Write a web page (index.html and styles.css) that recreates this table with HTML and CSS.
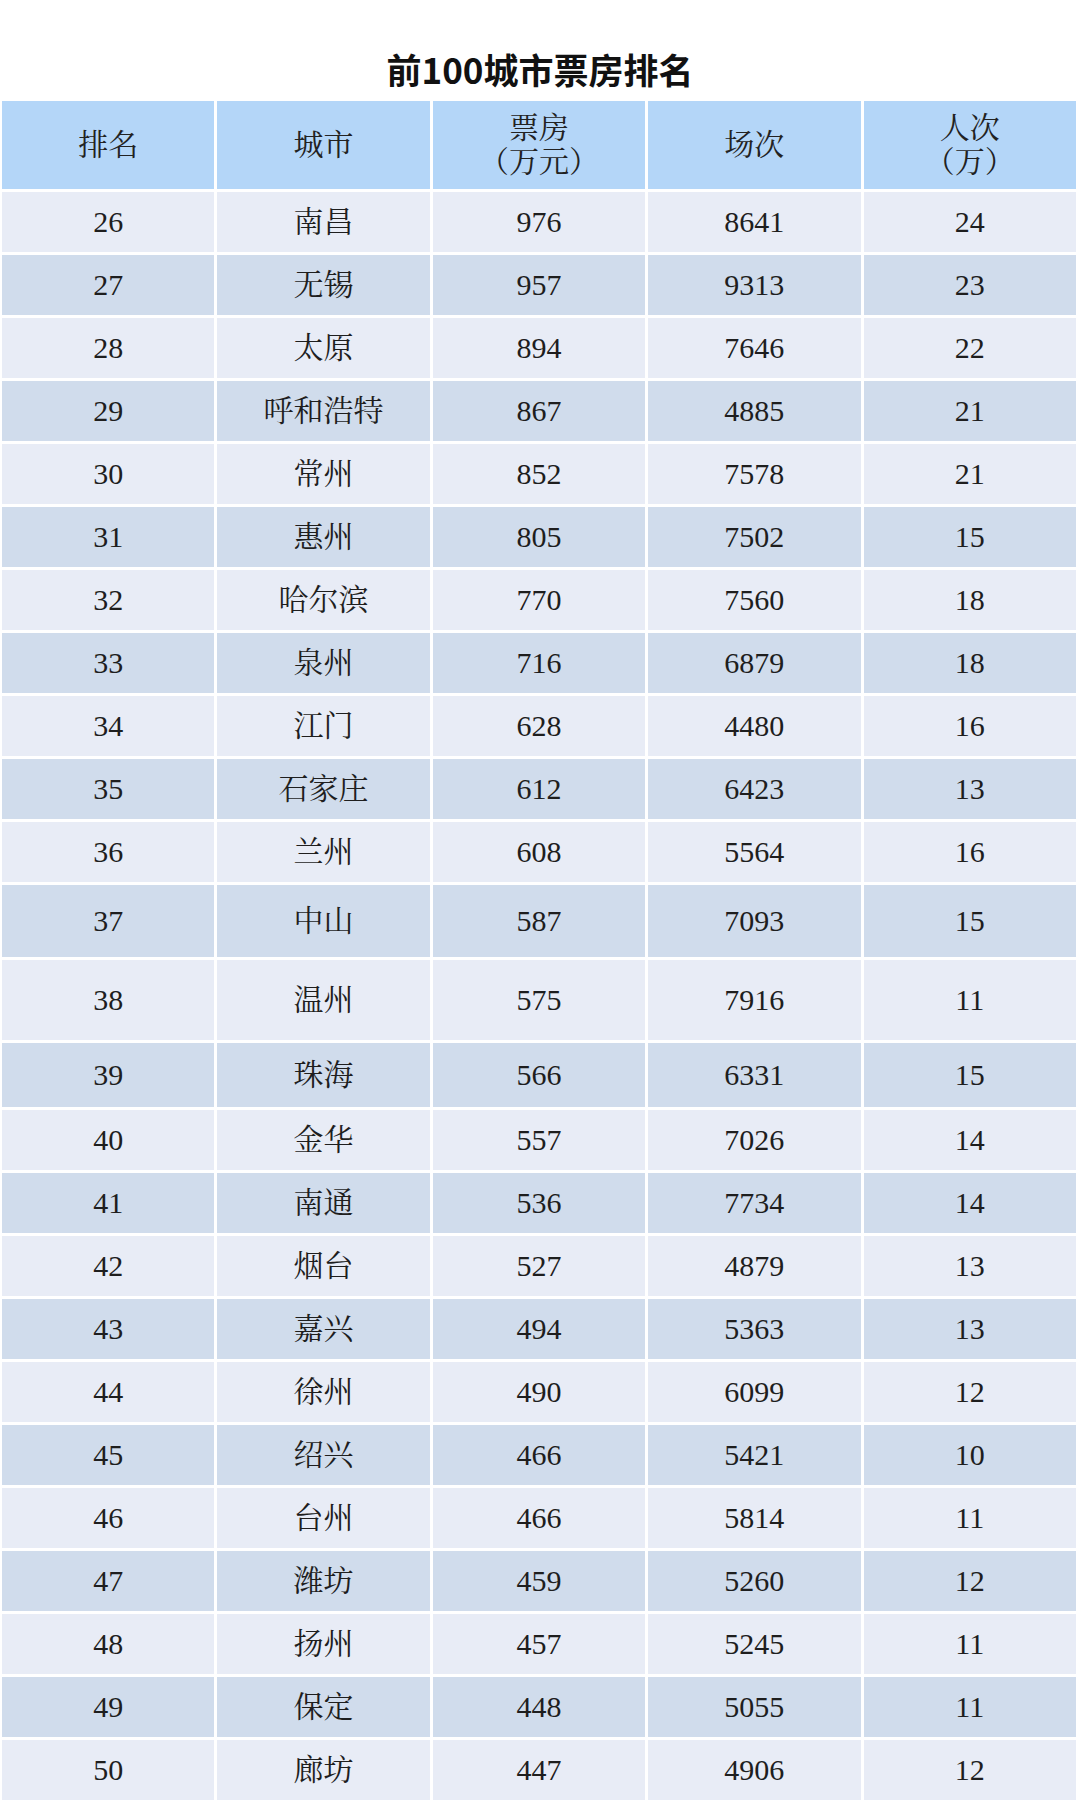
FILE: index.html
```html
<!DOCTYPE html>
<html lang="zh-CN">
<head>
<meta charset="utf-8">
<title>前100城市票房排名</title>
<link rel="stylesheet" href="styles.css">
</head>
<body>
<h1 class="title">前100城市票房排名</h1>
<table class="rank">
  <thead>
    <tr>
      <th>排名</th>
      <th>城市</th>
      <th>票房<br>（万元）</th>
      <th>场次</th>
      <th>人次<br>（万）</th>
    </tr>
  </thead>
  <tbody>
    <tr><td>26</td><td>南昌</td><td>976</td><td>8641</td><td>24</td></tr>
    <tr><td>27</td><td>无锡</td><td>957</td><td>9313</td><td>23</td></tr>
    <tr><td>28</td><td>太原</td><td>894</td><td>7646</td><td>22</td></tr>
    <tr><td>29</td><td>呼和浩特</td><td>867</td><td>4885</td><td>21</td></tr>
    <tr><td>30</td><td>常州</td><td>852</td><td>7578</td><td>21</td></tr>
    <tr><td>31</td><td>惠州</td><td>805</td><td>7502</td><td>15</td></tr>
    <tr><td>32</td><td>哈尔滨</td><td>770</td><td>7560</td><td>18</td></tr>
    <tr><td>33</td><td>泉州</td><td>716</td><td>6879</td><td>18</td></tr>
    <tr><td>34</td><td>江门</td><td>628</td><td>4480</td><td>16</td></tr>
    <tr><td>35</td><td>石家庄</td><td>612</td><td>6423</td><td>13</td></tr>
    <tr><td>36</td><td>兰州</td><td>608</td><td>5564</td><td>16</td></tr>
    <tr class="tall-a"><td>37</td><td>中山</td><td>587</td><td>7093</td><td>15</td></tr>
    <tr class="tall-b"><td>38</td><td>温州</td><td>575</td><td>7916</td><td>11</td></tr>
    <tr class="tall-c"><td>39</td><td>珠海</td><td>566</td><td>6331</td><td>15</td></tr>
    <tr><td>40</td><td>金华</td><td>557</td><td>7026</td><td>14</td></tr>
    <tr><td>41</td><td>南通</td><td>536</td><td>7734</td><td>14</td></tr>
    <tr><td>42</td><td>烟台</td><td>527</td><td>4879</td><td>13</td></tr>
    <tr><td>43</td><td>嘉兴</td><td>494</td><td>5363</td><td>13</td></tr>
    <tr><td>44</td><td>徐州</td><td>490</td><td>6099</td><td>12</td></tr>
    <tr><td>45</td><td>绍兴</td><td>466</td><td>5421</td><td>10</td></tr>
    <tr><td>46</td><td>台州</td><td>466</td><td>5814</td><td>11</td></tr>
    <tr><td>47</td><td>潍坊</td><td>459</td><td>5260</td><td>12</td></tr>
    <tr><td>48</td><td>扬州</td><td>457</td><td>5245</td><td>11</td></tr>
    <tr><td>49</td><td>保定</td><td>448</td><td>5055</td><td>11</td></tr>
    <tr><td>50</td><td>廊坊</td><td>447</td><td>4906</td><td>12</td></tr>
  </tbody>
</table>
</body>
</html>
```
FILE: styles.css
```css
html, body {
  margin: 0;
  padding: 0;
  background: #ffffff;
}

body {
  width: 1080px;
  overflow: hidden;
}

.title {
  margin: 0;
  padding: 51px 0 12px;
  height: 35px;
  line-height: 35px;
  font-size: 35px;
  font-weight: 700;
  text-align: center;
  color: #111111;
  font-family: "Noto Sans CJK SC", "Noto Sans", sans-serif;
}

.rank {
  width: 1080px;
  margin-left: -1px;
  table-layout: fixed;
  border-collapse: separate;
  border-spacing: 3px;
  font-family: "Liberation Serif", "Noto Serif CJK SC", "Noto Sans CJK SC", serif;
  font-size: 30px;
  color: #1e1e1e;
}

.rank th,
.rank td {
  padding: 0;
  text-align: center;
  vertical-align: middle;
}

.rank th {
  height: 88px;
  background: #b4d6f8;
  font-weight: 400;
  line-height: 34px;
  color: #222222;
}

.rank td {
  height: 60px;
  line-height: 34px;
}

.rank tbody tr:nth-child(odd) td {
  background: #e8ecf6;
}

.rank tbody tr:nth-child(even) td {
  background: #d0dcec;
}

.rank tr.tall-a td {
  height: 72px;
}

.rank tr.tall-b td {
  height: 80px;
}

.rank tr.tall-c td {
  height: 64px;
}
```
